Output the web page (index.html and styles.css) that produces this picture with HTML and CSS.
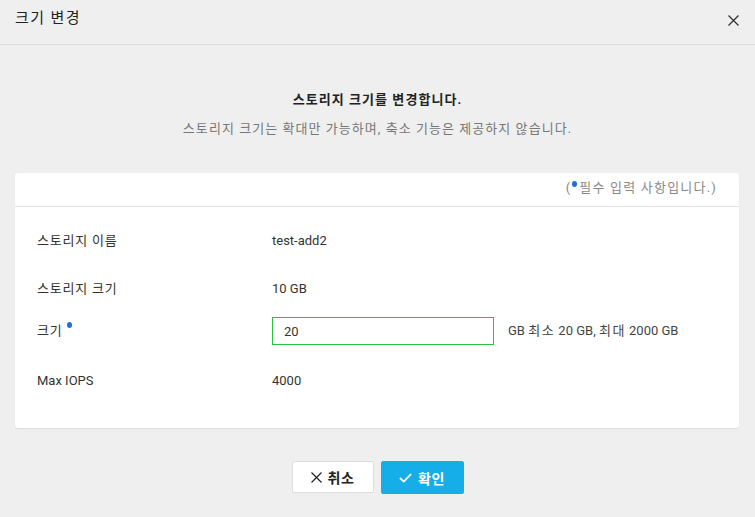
FILE: index.html
```html
<!DOCTYPE html>
<html lang="ko">
<head>
<meta charset="utf-8">
<link rel="stylesheet" href="styles.css">
</head>
<body>
<div class="dialog">
  <header class="dlg-header">
    <h1 class="dlg-title">크기 변경</h1>
    <button class="close-btn" aria-label="닫기">
      <svg width="11" height="11" viewBox="0 0 11 11"><path d="M0.5 0.5L10.5 10.5M10.5 0.5L0.5 10.5" stroke="#333" stroke-width="1.3" fill="none"/></svg>
    </button>
  </header>
  <section class="intro">
    <p class="intro-title">스토리지 크기를 변경합니다.</p>
    <p class="intro-sub">스토리지 크기는 확대만 가능하며, 축소 기능은 제공하지 않습니다.</p>
  </section>
  <section class="card">
    <div class="card-top">(<span class="req-dot"></span>필수 입력 사항입니다.)</div>
    <div class="card-body">
      <div class="row">
        <div class="label ko">스토리지 이름</div>
        <div class="value">test-add2</div>
      </div>
      <div class="row">
        <div class="label ko">스토리지 크기</div>
        <div class="value">10 GB</div>
      </div>
      <div class="row row-input">
        <div class="label ko">크기<span class="req-dot sup"></span></div>
        <div class="value">
          <input class="size-input" type="text" value="20">
          <span class="hint">GB <span class="ko">최소</span> 20 GB, <span class="ko">최대</span> 2000 GB</span>
        </div>
      </div>
      <div class="row">
        <div class="label">Max IOPS</div>
        <div class="value">4000</div>
      </div>
    </div>
  </section>
  <footer class="actions">
    <button class="btn btn-cancel">
      <svg width="11" height="11" viewBox="0 0 11 11"><path d="M0.5 0.5L10.5 10.5M10.5 0.5L0.5 10.5" stroke="#222" stroke-width="1.2" fill="none"/></svg>
      <span>취소</span>
    </button>
    <button class="btn btn-ok">
      <svg width="13" height="10" viewBox="0 0 13 10"><path d="M1 5L4.8 8.6L12 1.2" stroke="#fff" stroke-width="1.8" fill="none"/></svg>
      <span>확인</span>
    </button>
  </footer>
</div>
</body>
</html>
```

FILE: styles.css
```css
* { box-sizing: border-box; }
html, body { margin: 0; padding: 0; }
body {
  background: #efefef;
  font-family: Roboto, "Noto Sans CJK KR", sans-serif;
  font-size: 13px;
  color: #333;
  width: 755px;
  height: 517px;
  overflow: hidden;
}
.ko { letter-spacing: 0.8px; }
.dlg-header {
  height: 45px;
  border-bottom: 1px solid #dcdcdc;
  display: flex;
  align-items: center;
  justify-content: space-between;
  padding: 0 16px 8px 15px;
}
.dlg-title {
  margin: 0;
  font-size: 15px;
  font-weight: 400;
  color: #222;
  line-height: 20px;
  letter-spacing: 1.4px;
}
.close-btn {
  border: 0;
  background: none;
  padding: 0;
  width: 11px;
  height: 11px;
  display: flex;
  margin-top: 4px;
}
.intro {
  text-align: center;
  padding-top: 46px;
  height: 128px;
}
.intro p { margin: 0; line-height: 18px; letter-spacing: 1.05px; }
.intro-title { font-weight: 700; color: #222; }
.intro-sub { color: #777; margin-top: 11px !important; }
.card {
  margin: 0 16px 0 15px;
  background: #fff;
  border-radius: 3px;
  box-shadow: 0 1px 1px rgba(0,0,0,0.08);
}
.card-top {
  height: 34px;
  border-bottom: 1px solid #e4e4e4;
  text-align: right;
  padding: 6px 22px 0 0;
  color: #888;
  line-height: 18px;
  letter-spacing: 1.2px;
}
.req-dot {
  display: inline-block;
  width: 5px;
  height: 6px;
  border-radius: 50%;
  background: #1f6fd6;
  vertical-align: 5px;
  margin: 0 2px 0 1px;
}
.req-dot.sup { margin-left: 4px; vertical-align: 7px; }
.card-body { padding: 10px 22px 23px 22px; }
.row {
  display: flex;
  align-items: center;
  padding: 15px 0;
  line-height: 18px;
}
.row-input { padding: 4px 0 12px; }
.label { width: 235px; color: #333; flex: none; }
.value { display: flex; align-items: center; color: #333; }
.size-input {
  width: 222px;
  height: 28px;
  border: 1px solid #27c23f;
  padding: 0 11px;
  font-family: Roboto, "Noto Sans CJK KR", sans-serif;
  font-size: 13px;
  color: #333;
  outline: none;
  margin: 0;
}
.hint { margin-left: 14px; color: #444; }
.hint .ko { letter-spacing: 1.5px; }
.actions {
  display: flex;
  justify-content: center;
  gap: 7px;
  margin-top: 33px;
}
.btn {
  height: 32px;
  width: 82px;
  border-radius: 2px;
  display: flex;
  align-items: center;
  justify-content: center;
  gap: 6px;
  font-family: "Noto Sans CJK KR", Roboto, sans-serif;
  font-size: 14px;
  font-weight: 700;
  padding: 0;
  letter-spacing: 0.5px;
}
.btn-cancel {
  background: #fff;
  border: 1px solid #dddddd;
  color: #222;
}
.btn-ok {
  background: #16aee8;
  border: 1px solid #16aee8;
  color: #fff;
  width: 83px;
  height: 33px;
}
```
